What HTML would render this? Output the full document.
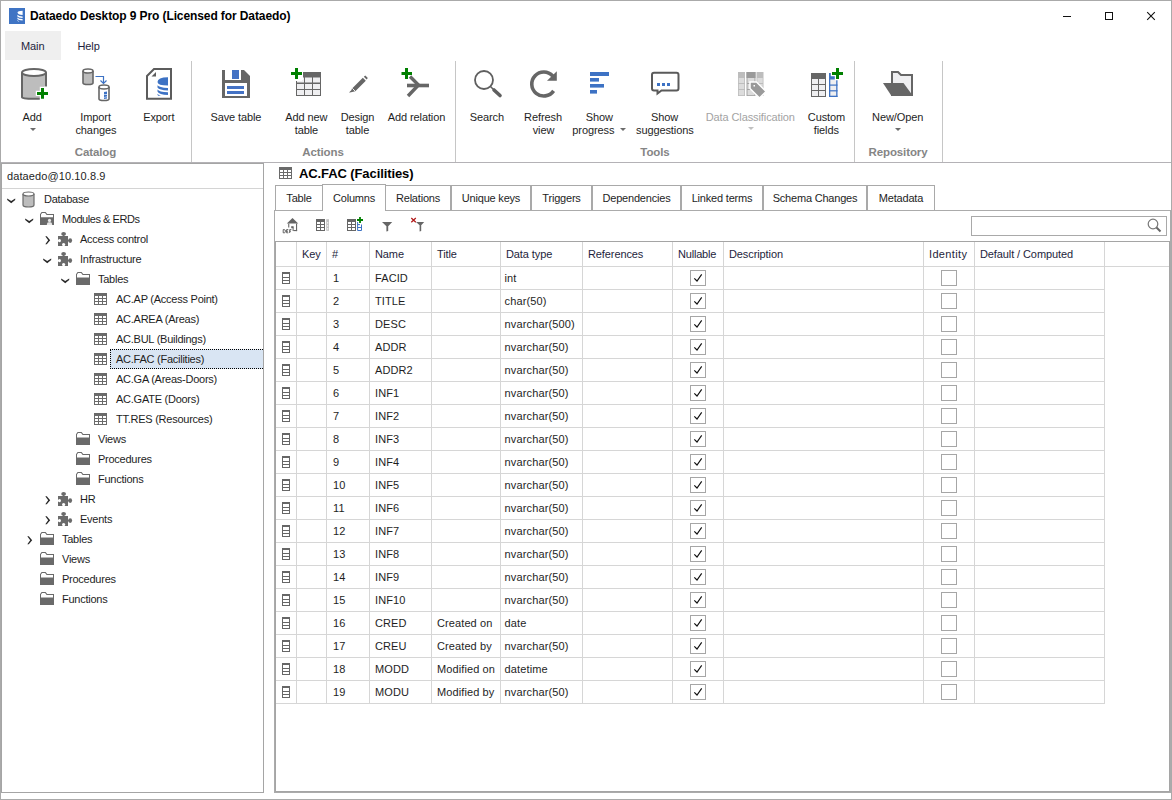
<!DOCTYPE html>
<html><head><meta charset="utf-8"><style>
html,body{margin:0;padding:0;width:1172px;height:800px;overflow:hidden;background:#fff;position:relative}
.t{position:absolute;white-space:nowrap;line-height:14px;font-family:"Liberation Sans", sans-serif;letter-spacing:-0.1px}
.c{text-align:center}
.r{position:absolute;box-sizing:content-box}
svg.r{overflow:visible}
</style></head><body>
<div class="r" style="left:0px;top:0px;width:1172px;height:1px;background:#aaaaaa;"></div>
<div class="r" style="left:0px;top:799px;width:1172px;height:1px;background:#aaaaaa;"></div>
<div class="r" style="left:0px;top:0px;width:1px;height:800px;background:#aaaaaa;"></div>
<div class="r" style="left:1171px;top:0px;width:1px;height:800px;background:#aaaaaa;"></div>
<svg class="r" style="left:9px;top:8px" width="16" height="16" viewBox="0 0 16 16"><rect width="16" height="16" fill="#3f74c4"/><path d="M8.6 4.6 Q8.6 3 13.6 2.8 L13.6 7 Q8.6 6.8 8.6 4.6Z" fill="#fff"/><path d="M8.4 6.8 Q9.5 8.3 13.6 8.4 L13.6 10 Q9.3 9.9 8.4 8.5Z" fill="#fff"/><path d="M8.4 9.4 Q9.5 10.9 13.6 11 L13.6 12.6 Q9.3 12.5 8.4 11.1Z" fill="#fff"/><path d="M8.4 12 Q9 13 10.5 13.4 L9.5 13.4 Q8.4 13 8.4 12.8Z" fill="#fff"/></svg>
<div class="t" style="left:30px;top:8.84px;font-size:12px;font-weight:bold;color:#000;">Dataedo Desktop 9 Pro (Licensed for Dataedo)</div>
<div class="r" style="left:1063px;top:16px;width:8px;height:1px;background:#111;"></div>
<div class="r" style="left:1105px;top:12px;width:6px;height:6px;border:1px solid #111"></div>
<svg class="r" style="left:1146px;top:11px" width="11" height="11" viewBox="0 0 11 11"><path d="M1.2 1.2 L8.8 8.8 M8.8 1.2 L1.2 8.8" stroke="#111" stroke-width="1.1"/></svg>
<div class="r" style="left:5px;top:31px;width:56px;height:29px;background:#efefef;"></div>
<div class="t" style="left:21px;top:39.19px;font-size:11px;color:#1e1e3c;">Main</div>
<div class="t" style="left:77.5px;top:39.19px;font-size:11px;color:#1e1e3c;">Help</div>
<div class="r" style="left:1px;top:162px;width:1170px;height:1px;background:#b4b2b6;"></div>
<div class="r" style="left:191px;top:61px;width:1px;height:101px;background:#c6c6c6;"></div>
<div class="r" style="left:455px;top:61px;width:1px;height:101px;background:#c6c6c6;"></div>
<div class="r" style="left:854px;top:61px;width:1px;height:101px;background:#c6c6c6;"></div>
<div class="r" style="left:942px;top:61px;width:1px;height:101px;background:#c6c6c6;"></div>
<div class="t c" style="left:-4.5px;width:200px;top:145.02px;font-size:11.5px;font-weight:bold;color:#858585;">Catalog</div>
<div class="t c" style="left:223px;width:200px;top:145.02px;font-size:11.5px;font-weight:bold;color:#858585;">Actions</div>
<div class="t c" style="left:555px;width:200px;top:145.02px;font-size:11.5px;font-weight:bold;color:#858585;">Tools</div>
<div class="t c" style="left:798px;width:200px;top:145.02px;font-size:11.5px;font-weight:bold;color:#858585;">Repository</div>
<div class="t c" style="left:-67.8px;width:200px;top:110.19px;font-size:11px;color:#1e1e1e;">Add</div>
<svg class="r" style="left:30px;top:128px" width="6" height="4" viewBox="0 0 6 4"><path d="M0 0 L6 0 L3 3 Z" fill="#6b6b6b"/></svg>
<div class="t c" style="left:-4.400000000000006px;width:200px;top:110.19px;font-size:11px;color:#1e1e1e;">Import</div>
<div class="t c" style="left:-4.099999999999994px;width:200px;top:123.19px;font-size:11px;color:#1e1e1e;">changes</div>
<div class="t c" style="left:58.80000000000001px;width:200px;top:110.19px;font-size:11px;color:#1e1e1e;">Export</div>
<div class="t c" style="left:135.9px;width:200px;top:110.19px;font-size:11px;color:#1e1e1e;">Save table</div>
<div class="t c" style="left:206.3px;width:200px;top:110.19px;font-size:11px;color:#1e1e1e;">Add new</div>
<div class="t c" style="left:206.39999999999998px;width:200px;top:123.19px;font-size:11px;color:#1e1e1e;">table</div>
<div class="t c" style="left:257.5px;width:200px;top:110.19px;font-size:11px;color:#1e1e1e;">Design</div>
<div class="t c" style="left:257.5px;width:200px;top:123.19px;font-size:11px;color:#1e1e1e;">table</div>
<div class="t c" style="left:316.5px;width:200px;top:110.19px;font-size:11px;color:#1e1e1e;">Add relation</div>
<div class="t c" style="left:386.9px;width:200px;top:110.19px;font-size:11px;color:#1e1e1e;">Search</div>
<div class="t c" style="left:443px;width:200px;top:110.19px;font-size:11px;color:#1e1e1e;">Refresh</div>
<div class="t c" style="left:443.5px;width:200px;top:123.19px;font-size:11px;color:#1e1e1e;">view</div>
<div class="t c" style="left:499.4px;width:200px;top:110.19px;font-size:11px;color:#1e1e1e;">Show</div>
<div class="t c" style="left:493.29999999999995px;width:200px;top:123.19px;font-size:11px;color:#1e1e1e;">progress</div>
<svg class="r" style="left:619.5px;top:128px" width="6" height="4" viewBox="0 0 6 4"><path d="M0 0 L6 0 L3 3 Z" fill="#6b6b6b"/></svg>
<div class="t c" style="left:564.6px;width:200px;top:110.19px;font-size:11px;color:#1e1e1e;">Show</div>
<div class="t c" style="left:564.8px;width:200px;top:123.19px;font-size:11px;color:#1e1e1e;">suggestions</div>
<div class="t c" style="left:650.3px;width:200px;top:110.19px;font-size:11px;color:#a3a3a3;">Data Classification</div>
<svg class="r" style="left:748.4px;top:127px" width="6" height="4" viewBox="0 0 6 4"><path d="M0 0 L6 0 L3 3 Z" fill="#c0c0c0"/></svg>
<div class="t c" style="left:726.5px;width:200px;top:110.19px;font-size:11px;color:#1e1e1e;">Custom</div>
<div class="t c" style="left:726.3px;width:200px;top:123.19px;font-size:11px;color:#1e1e1e;">fields</div>
<div class="t c" style="left:797.7px;width:200px;top:110.19px;font-size:11px;color:#1e1e1e;">New/Open</div>
<svg class="r" style="left:895px;top:128px" width="6" height="4" viewBox="0 0 6 4"><path d="M0 0 L6 0 L3 3 Z" fill="#6b6b6b"/></svg>
<svg class="r" style="left:17px;top:64px" width="36" height="40" viewBox="0 0 36 40"><path d="M5 8.5 L5 33.5 Q5 34.8 17 34.8 Q29 34.8 29 33.5 L29 8.5" fill="#bdbdbd" stroke="#666666" stroke-width="2"/><ellipse cx="17" cy="8.5" rx="12" ry="3.6" fill="#fff" stroke="#666666" stroke-width="2"/><path d="M18.8 29.4 L32.2 29.4 M25.5 22.8 L25.5 36.2" stroke="#fff" stroke-width="5.4"/><rect x="27.5" y="22.5" width="4" height="14" fill="#fff"/><path d="M20 29.4 L31 29.4 M25.5 24 L25.5 34.8" stroke="#008000" stroke-width="3"/></svg>
<svg class="r" style="left:80px;top:64.5px" width="34" height="40" viewBox="0 0 34 40"><path d="M3 6 L3 18 Q3 19.5 8 19.5 Q13 19.5 13 18 L13 6" fill="#bdbdbd" stroke="#666666" stroke-width="1.6"/><ellipse cx="8" cy="6" rx="5" ry="2" fill="#fff" stroke="#666666" stroke-width="1.6"/><path d="M15.5 11.5 L23.5 11.5 L23.5 18" fill="none" stroke="#3d72c4" stroke-width="1.2"/><path d="M20.5 15.5 L23.5 18.5 L26.5 15.5" fill="none" stroke="#3d72c4" stroke-width="1.2"/><path d="M19 22 L19 34 Q19 35.5 24 35.5 Q29 35.5 29 34 L29 22" fill="#fff" stroke="#666666" stroke-width="1.6"/><ellipse cx="24" cy="22" rx="5" ry="2" fill="#fff" stroke="#666666" stroke-width="1.6"/><path d="M24 27 L27 26.5 L27 29 L24 29.5Z M24 30 L27 29.8 L27 31.5 L24 32Z M24 32.5 L27 32.3 L27 33.5 L24 34Z" fill="#3d72c4"/></svg>
<svg class="r" style="left:144px;top:64px" width="32" height="40" viewBox="0 0 32 40"><path d="M3 12 L10 5 L27 5 L27 34.8 L3 34.8 Z" fill="#fff" stroke="#5c5c5c" stroke-width="2"/><path d="M7.5 12.5 L12 12.5 L12 8 Z" fill="#5c5c5c"/><path d="M13.5 18 Q13.5 13.5 24 13.3 L24 21.5 Q13.5 21.5 13.5 18Z" fill="#3d72c4"/><path d="M13.5 21.2 Q15 23.5 24 24 L24 26.5 Q15 26.2 13.5 23.5Z" fill="#3d72c4"/><path d="M13.5 25.5 Q15 28 24 28.3 L24 31 Q15 30.7 13.5 27.5Z" fill="#3d72c4"/><path d="M13.5 29.8 Q15 31.6 17 32 L15 32 Q13.5 31.5 13.5 30.5Z" fill="#3d72c4"/></svg>
<svg class="r" style="left:220px;top:66px" width="32" height="34" viewBox="0 0 32 34"><path d="M2 4 L21 4 L21 14 L5 14 L5 4 Z" fill="none"/><path d="M2 4 L24 4 L30 10 L30 32 L2 32 Z" fill="#666666"/><rect x="5" y="4" width="16" height="10" fill="#fff"/><rect x="12" y="4" width="7" height="9" fill="#4472c4"/><rect x="5" y="17" width="22" height="13" fill="#fff"/><rect x="7" y="20" width="17" height="3" fill="#4472c4"/><rect x="7" y="25" width="17" height="3" fill="#4472c4"/></svg>
<svg class="r" style="left:288px;top:64px" width="36" height="36" viewBox="0 0 36 36"><rect x="8" y="8" width="25" height="24" fill="#666666"/><rect x="9" y="13.5" width="7" height="5" fill="#efeff1"/><rect x="9" y="20" width="7" height="5" fill="#efeff1"/><rect x="9" y="26" width="7" height="5" fill="#efeff1"/><rect x="17" y="13.5" width="7" height="5" fill="#efeff1"/><rect x="17" y="20" width="7" height="5" fill="#efeff1"/><rect x="17" y="26" width="7" height="5" fill="#efeff1"/><rect x="25" y="13.5" width="7" height="5" fill="#efeff1"/><rect x="25" y="20" width="7" height="5" fill="#efeff1"/><rect x="25" y="26" width="7" height="5" fill="#efeff1"/><rect x="2" y="3" width="12" height="14" fill="#fff"/><rect x="1" y="5" width="14" height="11" fill="#fff"/><path d="M3 9.5 L14 9.5 M8.5 4 L8.5 15" stroke="#008000" stroke-width="3"/></svg>
<svg class="r" style="left:344px;top:70px" width="28" height="28" viewBox="0 0 28 28"><path d="M6 22.5 L8.3 18.3 L18.8 7.8 L21.8 10.8 L11.3 21.3 Z" fill="#666"/><path d="M19.8 6.8 L21.3 5.5 L23.8 8 L22.6 9.6 Z" fill="#666"/><path d="M8.3 18.3 L11.3 21.3" stroke="#fff" stroke-width="0.9"/><path d="M5 23 L6.4 20.8 L7.2 21.6Z" fill="#666"/></svg>
<svg class="r" style="left:396px;top:64px" width="36" height="36" viewBox="0 0 36 36"><path d="M11 21.5 L33 21.5" stroke="#666" stroke-width="3.6"/><path d="M14 12.5 L22.5 21 L12 32" fill="none" stroke="#666" stroke-width="3.4"/><path d="M5.5 9.5 L16 9.5 M10.5 4 L10.5 15" stroke="#008000" stroke-width="3"/></svg>
<svg class="r" style="left:468px;top:64px" width="36" height="36" viewBox="0 0 36 36"><circle cx="16" cy="16" r="9" fill="none" stroke="#5f5f5f" stroke-width="1.8"/><path d="M22.5 22.5 L25 25" stroke="#5f5f5f" stroke-width="1.5"/><path d="M26 26 L32 31.5" stroke="#5f5f5f" stroke-width="3.6" stroke-linecap="round"/></svg>
<svg class="r" style="left:524px;top:64px" width="36" height="36" viewBox="0 0 36 36"><path d="M29.6 26.9 A12 12 0 1 1 28.7 12" fill="none" stroke="#666" stroke-width="3.6"/><path d="M32.8 7.2 L32.8 16.8 L23 16.8 Z" fill="#666"/></svg>
<svg class="r" style="left:588px;top:68px" width="24" height="28" viewBox="0 0 24 28"><rect x="2" y="4" width="19" height="4" fill="#3d72c4"/><rect x="2" y="10" width="9" height="3.6" fill="#3d72c4"/><rect x="2" y="16" width="14" height="3.6" fill="#3d72c4"/><rect x="2" y="22" width="7" height="3.6" fill="#3d72c4"/></svg>
<svg class="r" style="left:648px;top:68px" width="34" height="30" viewBox="0 0 34 30"><path d="M6 4.8 L28.5 4.8 Q30.5 4.8 30.5 6.8 L30.5 20.5 Q30.5 22.5 28.5 22.5 L13.5 22.5 L9.5 25.5 L9.5 22.5 L6 22.5 Q4 22.5 4 20.5 L4 6.8 Q4 4.8 6 4.8 Z" fill="#fff" stroke="#5a5a5a" stroke-width="2"/><rect x="9" y="15" width="3" height="3" fill="#3d72c4"/><rect x="14" y="15" width="3" height="3" fill="#3d72c4"/><rect x="19" y="15" width="3" height="3" fill="#3d72c4"/></svg>
<svg class="r" style="left:732px;top:64px" width="36" height="36" viewBox="0 0 36 36"><rect x="6" y="8" width="7" height="24" fill="#bdbdbd"/><rect x="14.5" y="8" width="9" height="24" fill="#a3a3a3"/><rect x="24.5" y="8" width="7" height="24" fill="#bdbdbd"/><rect x="6.8" y="14" width="5.4" height="5" fill="#dcdcdc"/><rect x="6.8" y="20" width="5.4" height="5" fill="#dcdcdc"/><rect x="6.8" y="26" width="5.4" height="5.2" fill="#dcdcdc"/><rect x="14.5" y="8" width="9" height="6" fill="#9a9a9a"/><rect x="15.5" y="14" width="7" height="5" fill="#dcdcdc"/><rect x="15.5" y="20" width="7" height="5" fill="#dcdcdc"/><rect x="15.5" y="26" width="7" height="5.2" fill="#dcdcdc"/><rect x="25.3" y="14" width="5.4" height="5" fill="#dcdcdc"/><rect x="25.3" y="20" width="5.4" height="5" fill="#dcdcdc"/><path d="M18 18 L24.5 18 L34 27.5 L27.5 34 L18 24.5 Z" fill="#9a9a9a" stroke="#fff" stroke-width="1.5"/><rect x="21.5" y="21" width="1.5" height="1.5" fill="#fff"/></svg>
<svg class="r" style="left:806px;top:64px" width="40" height="36" viewBox="0 0 40 36"><rect x="5" y="9" width="15" height="24" fill="#666"/><rect x="6" y="15" width="6" height="5" fill="#efeff1"/><rect x="6" y="21" width="6" height="5" fill="#efeff1"/><rect x="6" y="27" width="6" height="5" fill="#efeff1"/><rect x="13" y="15" width="6" height="5" fill="#efeff1"/><rect x="13" y="21" width="6" height="5" fill="#efeff1"/><rect x="13" y="27" width="6" height="5" fill="#efeff1"/><rect x="24" y="15" width="7" height="17" fill="#efeff1"/><rect x="23" y="9" width="1.3" height="24" fill="#3d72c4"/><rect x="23" y="9" width="7" height="6.5" fill="#3d72c4"/><rect x="23" y="31.7" width="8.5" height="1.3" fill="#3d72c4"/><rect x="30.2" y="15" width="1.3" height="18" fill="#3d72c4"/><rect x="23" y="20.5" width="8.5" height="1.2" fill="#3d72c4"/><rect x="23" y="26.2" width="8.5" height="1.2" fill="#3d72c4"/><path d="M24.8 9.5 L38.2 9.5 M31.5 2.8 L31.5 16.2" stroke="#fff" stroke-width="5.4"/><path d="M26 9.5 L37 9.5 M31.5 4 L31.5 15" stroke="#008000" stroke-width="3"/></svg>
<svg class="r" style="left:878px;top:64px" width="38" height="36" viewBox="0 0 38 36"><path d="M14 8 L20 8 L23 11 L34 11 L34 31 L14 31 Z" fill="#efeff1" stroke="#666" stroke-width="2"/><path d="M5 19 L25.5 19 L35 32 L13.5 32 Z" fill="#666"/></svg>
<div class="r" style="left:1px;top:163px;width:261px;height:628px;border:1px solid #a5a5a5"></div>
<div class="t" style="left:7px;top:169.19px;font-size:11px;color:#1e1e1e;letter-spacing:0.1px;">dataedo@10.10.8.9</div>
<div class="r" style="left:2px;top:188px;width:261px;height:1px;background:#d4d4d4;"></div>
<svg class="r" style="left:7px;top:197.5px" width="9" height="6" viewBox="0 0 9 6"><path d="M0.2 0.4 L4.2 3.1 L8.2 0.4 L8.2 1.9 L4.2 5.3 L0.2 1.9 Z" fill="#2a2a2a"/></svg>
<svg class="r" style="left:22px;top:191px" width="13" height="17" viewBox="0 0 13 17"><path d="M1 3 L1 14 Q1 16 6.5 16 Q12 16 12 14 L12 3" fill="#bdbdbd" stroke="#6a6a6a" stroke-width="1.2"/><ellipse cx="6.5" cy="3" rx="5.5" ry="2" fill="#fff" stroke="#6a6a6a" stroke-width="1.2"/></svg>
<div class="t" style="left:44px;top:192.19px;font-size:11px;color:#1e1e1e;letter-spacing:-0.25px;">Database</div>
<svg class="r" style="left:25px;top:217.5px" width="9" height="6" viewBox="0 0 9 6"><path d="M0.2 0.4 L4.2 3.1 L8.2 0.4 L8.2 1.9 L4.2 5.3 L0.2 1.9 Z" fill="#2a2a2a"/></svg>
<svg class="r" style="left:40px;top:212px" width="14" height="13" viewBox="0 0 14 13"><path d="M0 2.2 L1.6 0 L5.6 0 L7.2 2 L14 2 L14 13 L0 13 Z" fill="#6a6a6a"/><path d="M1 5.2 L1 2.6 L2.1 1 L5.1 1 L6.6 3 L13 3 L13 5.2 Z" fill="#fff"/><circle cx="9.5" cy="8.4" r="1.6" fill="#e8e8e8"/><path d="M6.8 13 L7.3 10.8 L8.6 10.2 L10.4 10.2 L11.7 10.8 L12.2 13 Z" fill="#e8e8e8"/></svg>
<div class="t" style="left:62px;top:212.19px;font-size:11px;color:#1e1e1e;letter-spacing:-0.45px;">Modules &amp; ERDs</div>
<svg class="r" style="left:45px;top:236px" width="6" height="9" viewBox="0 0 6 9"><path d="M0.3 0.2 L1.8 0.2 L5.2 4.2 L1.8 8.2 L0.3 8.2 L3.2 4.2 Z" fill="#2a2a2a"/></svg>
<svg class="r" style="left:58px;top:232px" width="15" height="15" viewBox="0 0 15 15"><rect x="0" y="4" width="10" height="10" fill="#6a6a6a"/><ellipse cx="5.6" cy="1.9" rx="2.4" ry="1.8" fill="#6a6a6a"/><rect x="4.8" y="2" width="1.6" height="2.5" fill="#6a6a6a"/><ellipse cx="12.2" cy="8.6" rx="1.9" ry="2.4" fill="#6a6a6a"/><rect x="9.5" y="7.8" width="2.5" height="1.6" fill="#6a6a6a"/><ellipse cx="1.5" cy="8.6" rx="1.5" ry="1.7" fill="#fff"/><rect x="0" y="8" width="1" height="1.2" fill="#fff"/><ellipse cx="5.6" cy="12.4" rx="1.6" ry="1.5" fill="#fff"/><rect x="5" y="13" width="1.2" height="1" fill="#fff"/></svg>
<div class="t" style="left:80px;top:232.19px;font-size:11px;color:#1e1e1e;letter-spacing:-0.25px;">Access control</div>
<svg class="r" style="left:43px;top:257.5px" width="9" height="6" viewBox="0 0 9 6"><path d="M0.2 0.4 L4.2 3.1 L8.2 0.4 L8.2 1.9 L4.2 5.3 L0.2 1.9 Z" fill="#2a2a2a"/></svg>
<svg class="r" style="left:58px;top:252px" width="15" height="15" viewBox="0 0 15 15"><rect x="0" y="4" width="10" height="10" fill="#6a6a6a"/><ellipse cx="5.6" cy="1.9" rx="2.4" ry="1.8" fill="#6a6a6a"/><rect x="4.8" y="2" width="1.6" height="2.5" fill="#6a6a6a"/><ellipse cx="12.2" cy="8.6" rx="1.9" ry="2.4" fill="#6a6a6a"/><rect x="9.5" y="7.8" width="2.5" height="1.6" fill="#6a6a6a"/><ellipse cx="1.5" cy="8.6" rx="1.5" ry="1.7" fill="#fff"/><rect x="0" y="8" width="1" height="1.2" fill="#fff"/><ellipse cx="5.6" cy="12.4" rx="1.6" ry="1.5" fill="#fff"/><rect x="5" y="13" width="1.2" height="1" fill="#fff"/></svg>
<div class="t" style="left:80px;top:252.19px;font-size:11px;color:#1e1e1e;letter-spacing:-0.25px;">Infrastructure</div>
<svg class="r" style="left:61px;top:277.5px" width="9" height="6" viewBox="0 0 9 6"><path d="M0.2 0.4 L4.2 3.1 L8.2 0.4 L8.2 1.9 L4.2 5.3 L0.2 1.9 Z" fill="#2a2a2a"/></svg>
<svg class="r" style="left:76px;top:272px" width="14" height="13" viewBox="0 0 14 13"><path d="M0 2.2 L1.6 0 L5.6 0 L7.2 2 L14 2 L14 13 L0 13 Z" fill="#6a6a6a"/><path d="M1 5.6 L1 2.6 L2.1 1 L5.1 1 L6.6 3 L13 3 L13 5.6 Z" fill="#fff"/></svg>
<div class="t" style="left:98px;top:272.19px;font-size:11px;color:#1e1e1e;letter-spacing:-0.25px;">Tables</div>
<svg class="r" style="left:94px;top:293px" width="13" height="12" viewBox="0 0 13 12"><rect x="0" y="0" width="13" height="12" fill="#6a6a6a"/><rect x="1" y="3" width="3" height="2" fill="#fff"/><rect x="1" y="6" width="3" height="2" fill="#fff"/><rect x="1" y="9" width="3" height="2" fill="#fff"/><rect x="5" y="3" width="3" height="2" fill="#fff"/><rect x="5" y="6" width="3" height="2" fill="#fff"/><rect x="5" y="9" width="3" height="2" fill="#fff"/><rect x="9" y="3" width="3" height="2" fill="#fff"/><rect x="9" y="6" width="3" height="2" fill="#fff"/><rect x="9" y="9" width="3" height="2" fill="#fff"/></svg>
<div class="t" style="left:116px;top:292.19px;font-size:11px;color:#1e1e1e;letter-spacing:-0.25px;">AC.AP (Access Point)</div>
<svg class="r" style="left:94px;top:313px" width="13" height="12" viewBox="0 0 13 12"><rect x="0" y="0" width="13" height="12" fill="#6a6a6a"/><rect x="1" y="3" width="3" height="2" fill="#fff"/><rect x="1" y="6" width="3" height="2" fill="#fff"/><rect x="1" y="9" width="3" height="2" fill="#fff"/><rect x="5" y="3" width="3" height="2" fill="#fff"/><rect x="5" y="6" width="3" height="2" fill="#fff"/><rect x="5" y="9" width="3" height="2" fill="#fff"/><rect x="9" y="3" width="3" height="2" fill="#fff"/><rect x="9" y="6" width="3" height="2" fill="#fff"/><rect x="9" y="9" width="3" height="2" fill="#fff"/></svg>
<div class="t" style="left:116px;top:312.19px;font-size:11px;color:#1e1e1e;letter-spacing:-0.25px;">AC.AREA (Areas)</div>
<svg class="r" style="left:94px;top:333px" width="13" height="12" viewBox="0 0 13 12"><rect x="0" y="0" width="13" height="12" fill="#6a6a6a"/><rect x="1" y="3" width="3" height="2" fill="#fff"/><rect x="1" y="6" width="3" height="2" fill="#fff"/><rect x="1" y="9" width="3" height="2" fill="#fff"/><rect x="5" y="3" width="3" height="2" fill="#fff"/><rect x="5" y="6" width="3" height="2" fill="#fff"/><rect x="5" y="9" width="3" height="2" fill="#fff"/><rect x="9" y="3" width="3" height="2" fill="#fff"/><rect x="9" y="6" width="3" height="2" fill="#fff"/><rect x="9" y="9" width="3" height="2" fill="#fff"/></svg>
<div class="t" style="left:116px;top:332.19px;font-size:11px;color:#1e1e1e;letter-spacing:-0.25px;">AC.BUL (Buildings)</div>
<div class="r" style="left:110px;top:349px;width:152px;height:18px;background:#d9e5f3;border:1px dotted #000;border-right:none"></div>
<svg class="r" style="left:94px;top:353px" width="13" height="12" viewBox="0 0 13 12"><rect x="0" y="0" width="13" height="12" fill="#6a6a6a"/><rect x="1" y="3" width="3" height="2" fill="#fff"/><rect x="1" y="6" width="3" height="2" fill="#fff"/><rect x="1" y="9" width="3" height="2" fill="#fff"/><rect x="5" y="3" width="3" height="2" fill="#fff"/><rect x="5" y="6" width="3" height="2" fill="#fff"/><rect x="5" y="9" width="3" height="2" fill="#fff"/><rect x="9" y="3" width="3" height="2" fill="#fff"/><rect x="9" y="6" width="3" height="2" fill="#fff"/><rect x="9" y="9" width="3" height="2" fill="#fff"/></svg>
<div class="t" style="left:116px;top:352.19px;font-size:11px;color:#1e1e1e;letter-spacing:-0.25px;">AC.FAC (Facilities)</div>
<svg class="r" style="left:94px;top:373px" width="13" height="12" viewBox="0 0 13 12"><rect x="0" y="0" width="13" height="12" fill="#6a6a6a"/><rect x="1" y="3" width="3" height="2" fill="#fff"/><rect x="1" y="6" width="3" height="2" fill="#fff"/><rect x="1" y="9" width="3" height="2" fill="#fff"/><rect x="5" y="3" width="3" height="2" fill="#fff"/><rect x="5" y="6" width="3" height="2" fill="#fff"/><rect x="5" y="9" width="3" height="2" fill="#fff"/><rect x="9" y="3" width="3" height="2" fill="#fff"/><rect x="9" y="6" width="3" height="2" fill="#fff"/><rect x="9" y="9" width="3" height="2" fill="#fff"/></svg>
<div class="t" style="left:116px;top:372.19px;font-size:11px;color:#1e1e1e;letter-spacing:-0.25px;">AC.GA (Areas-Doors)</div>
<svg class="r" style="left:94px;top:393px" width="13" height="12" viewBox="0 0 13 12"><rect x="0" y="0" width="13" height="12" fill="#6a6a6a"/><rect x="1" y="3" width="3" height="2" fill="#fff"/><rect x="1" y="6" width="3" height="2" fill="#fff"/><rect x="1" y="9" width="3" height="2" fill="#fff"/><rect x="5" y="3" width="3" height="2" fill="#fff"/><rect x="5" y="6" width="3" height="2" fill="#fff"/><rect x="5" y="9" width="3" height="2" fill="#fff"/><rect x="9" y="3" width="3" height="2" fill="#fff"/><rect x="9" y="6" width="3" height="2" fill="#fff"/><rect x="9" y="9" width="3" height="2" fill="#fff"/></svg>
<div class="t" style="left:116px;top:392.19px;font-size:11px;color:#1e1e1e;letter-spacing:-0.25px;">AC.GATE (Doors)</div>
<svg class="r" style="left:94px;top:413px" width="13" height="12" viewBox="0 0 13 12"><rect x="0" y="0" width="13" height="12" fill="#6a6a6a"/><rect x="1" y="3" width="3" height="2" fill="#fff"/><rect x="1" y="6" width="3" height="2" fill="#fff"/><rect x="1" y="9" width="3" height="2" fill="#fff"/><rect x="5" y="3" width="3" height="2" fill="#fff"/><rect x="5" y="6" width="3" height="2" fill="#fff"/><rect x="5" y="9" width="3" height="2" fill="#fff"/><rect x="9" y="3" width="3" height="2" fill="#fff"/><rect x="9" y="6" width="3" height="2" fill="#fff"/><rect x="9" y="9" width="3" height="2" fill="#fff"/></svg>
<div class="t" style="left:116px;top:412.19px;font-size:11px;color:#1e1e1e;letter-spacing:-0.25px;">TT.RES (Resources)</div>
<svg class="r" style="left:76px;top:432px" width="14" height="13" viewBox="0 0 14 13"><path d="M0 2.2 L1.6 0 L5.6 0 L7.2 2 L14 2 L14 13 L0 13 Z" fill="#6a6a6a"/><path d="M1 5.6 L1 2.6 L2.1 1 L5.1 1 L6.6 3 L13 3 L13 5.6 Z" fill="#fff"/></svg>
<div class="t" style="left:98px;top:432.19px;font-size:11px;color:#1e1e1e;letter-spacing:-0.25px;">Views</div>
<svg class="r" style="left:76px;top:452px" width="14" height="13" viewBox="0 0 14 13"><path d="M0 2.2 L1.6 0 L5.6 0 L7.2 2 L14 2 L14 13 L0 13 Z" fill="#6a6a6a"/><path d="M1 5.6 L1 2.6 L2.1 1 L5.1 1 L6.6 3 L13 3 L13 5.6 Z" fill="#fff"/></svg>
<div class="t" style="left:98px;top:452.19px;font-size:11px;color:#1e1e1e;letter-spacing:-0.25px;">Procedures</div>
<svg class="r" style="left:76px;top:472px" width="14" height="13" viewBox="0 0 14 13"><path d="M0 2.2 L1.6 0 L5.6 0 L7.2 2 L14 2 L14 13 L0 13 Z" fill="#6a6a6a"/><path d="M1 5.6 L1 2.6 L2.1 1 L5.1 1 L6.6 3 L13 3 L13 5.6 Z" fill="#fff"/></svg>
<div class="t" style="left:98px;top:472.19px;font-size:11px;color:#1e1e1e;letter-spacing:-0.25px;">Functions</div>
<svg class="r" style="left:45px;top:496px" width="6" height="9" viewBox="0 0 6 9"><path d="M0.3 0.2 L1.8 0.2 L5.2 4.2 L1.8 8.2 L0.3 8.2 L3.2 4.2 Z" fill="#2a2a2a"/></svg>
<svg class="r" style="left:58px;top:492px" width="15" height="15" viewBox="0 0 15 15"><rect x="0" y="4" width="10" height="10" fill="#6a6a6a"/><ellipse cx="5.6" cy="1.9" rx="2.4" ry="1.8" fill="#6a6a6a"/><rect x="4.8" y="2" width="1.6" height="2.5" fill="#6a6a6a"/><ellipse cx="12.2" cy="8.6" rx="1.9" ry="2.4" fill="#6a6a6a"/><rect x="9.5" y="7.8" width="2.5" height="1.6" fill="#6a6a6a"/><ellipse cx="1.5" cy="8.6" rx="1.5" ry="1.7" fill="#fff"/><rect x="0" y="8" width="1" height="1.2" fill="#fff"/><ellipse cx="5.6" cy="12.4" rx="1.6" ry="1.5" fill="#fff"/><rect x="5" y="13" width="1.2" height="1" fill="#fff"/></svg>
<div class="t" style="left:80px;top:492.19px;font-size:11px;color:#1e1e1e;letter-spacing:-0.25px;">HR</div>
<svg class="r" style="left:45px;top:516px" width="6" height="9" viewBox="0 0 6 9"><path d="M0.3 0.2 L1.8 0.2 L5.2 4.2 L1.8 8.2 L0.3 8.2 L3.2 4.2 Z" fill="#2a2a2a"/></svg>
<svg class="r" style="left:58px;top:512px" width="15" height="15" viewBox="0 0 15 15"><rect x="0" y="4" width="10" height="10" fill="#6a6a6a"/><ellipse cx="5.6" cy="1.9" rx="2.4" ry="1.8" fill="#6a6a6a"/><rect x="4.8" y="2" width="1.6" height="2.5" fill="#6a6a6a"/><ellipse cx="12.2" cy="8.6" rx="1.9" ry="2.4" fill="#6a6a6a"/><rect x="9.5" y="7.8" width="2.5" height="1.6" fill="#6a6a6a"/><ellipse cx="1.5" cy="8.6" rx="1.5" ry="1.7" fill="#fff"/><rect x="0" y="8" width="1" height="1.2" fill="#fff"/><ellipse cx="5.6" cy="12.4" rx="1.6" ry="1.5" fill="#fff"/><rect x="5" y="13" width="1.2" height="1" fill="#fff"/></svg>
<div class="t" style="left:80px;top:512.19px;font-size:11px;color:#1e1e1e;letter-spacing:-0.25px;">Events</div>
<svg class="r" style="left:27px;top:536px" width="6" height="9" viewBox="0 0 6 9"><path d="M0.3 0.2 L1.8 0.2 L5.2 4.2 L1.8 8.2 L0.3 8.2 L3.2 4.2 Z" fill="#2a2a2a"/></svg>
<svg class="r" style="left:40px;top:532px" width="14" height="13" viewBox="0 0 14 13"><path d="M0 2.2 L1.6 0 L5.6 0 L7.2 2 L14 2 L14 13 L0 13 Z" fill="#6a6a6a"/><path d="M1 5.6 L1 2.6 L2.1 1 L5.1 1 L6.6 3 L13 3 L13 5.6 Z" fill="#fff"/></svg>
<div class="t" style="left:62px;top:532.19px;font-size:11px;color:#1e1e1e;letter-spacing:-0.25px;">Tables</div>
<svg class="r" style="left:40px;top:552px" width="14" height="13" viewBox="0 0 14 13"><path d="M0 2.2 L1.6 0 L5.6 0 L7.2 2 L14 2 L14 13 L0 13 Z" fill="#6a6a6a"/><path d="M1 5.6 L1 2.6 L2.1 1 L5.1 1 L6.6 3 L13 3 L13 5.6 Z" fill="#fff"/></svg>
<div class="t" style="left:62px;top:552.19px;font-size:11px;color:#1e1e1e;letter-spacing:-0.25px;">Views</div>
<svg class="r" style="left:40px;top:572px" width="14" height="13" viewBox="0 0 14 13"><path d="M0 2.2 L1.6 0 L5.6 0 L7.2 2 L14 2 L14 13 L0 13 Z" fill="#6a6a6a"/><path d="M1 5.6 L1 2.6 L2.1 1 L5.1 1 L6.6 3 L13 3 L13 5.6 Z" fill="#fff"/></svg>
<div class="t" style="left:62px;top:572.19px;font-size:11px;color:#1e1e1e;letter-spacing:-0.25px;">Procedures</div>
<svg class="r" style="left:40px;top:592px" width="14" height="13" viewBox="0 0 14 13"><path d="M0 2.2 L1.6 0 L5.6 0 L7.2 2 L14 2 L14 13 L0 13 Z" fill="#6a6a6a"/><path d="M1 5.6 L1 2.6 L2.1 1 L5.1 1 L6.6 3 L13 3 L13 5.6 Z" fill="#fff"/></svg>
<div class="t" style="left:62px;top:592.19px;font-size:11px;color:#1e1e1e;letter-spacing:-0.25px;">Functions</div>
<svg class="r" style="left:279px;top:167px" width="13" height="12" viewBox="0 0 13 12"><rect x="0" y="0" width="13" height="12" fill="#6a6a6a"/><rect x="1" y="3" width="3" height="2" fill="#fff"/><rect x="1" y="6" width="3" height="2" fill="#fff"/><rect x="1" y="9" width="3" height="2" fill="#fff"/><rect x="5" y="3" width="3" height="2" fill="#fff"/><rect x="5" y="6" width="3" height="2" fill="#fff"/><rect x="5" y="9" width="3" height="2" fill="#fff"/><rect x="9" y="3" width="3" height="2" fill="#fff"/><rect x="9" y="6" width="3" height="2" fill="#fff"/><rect x="9" y="9" width="3" height="2" fill="#fff"/></svg>
<div class="t" style="left:299px;top:166.50px;font-size:13px;font-weight:bold;color:#000;">AC.FAC (Facilities)</div>
<div class="r" style="left:274px;top:210px;width:895px;height:581px;border:1px solid #ababab"></div>
<div class="r" style="left:275px;top:185px;width:46px;height:24px;background:#fff;border:1px solid #a9a9a9;border-bottom:none"></div>
<div class="t c" style="left:199.0px;width:200px;top:191.19px;font-size:11px;color:#1e1e1e;letter-spacing:-0.2px;">Table</div>
<div class="r" style="left:322px;top:184px;width:62px;height:26px;background:#fff;border:1px solid #a9a9a9;border-bottom:none"></div>
<div class="t c" style="left:254.0px;width:200px;top:191.19px;font-size:11px;color:#1e1e1e;letter-spacing:-0.2px;">Columns</div>
<div class="r" style="left:385px;top:185px;width:64px;height:24px;background:#fff;border:1px solid #a9a9a9;border-bottom:none"></div>
<div class="t c" style="left:318.0px;width:200px;top:191.19px;font-size:11px;color:#1e1e1e;letter-spacing:-0.2px;">Relations</div>
<div class="r" style="left:451px;top:185px;width:78px;height:24px;background:#fff;border:1px solid #a9a9a9;border-bottom:none"></div>
<div class="t c" style="left:391.0px;width:200px;top:191.19px;font-size:11px;color:#1e1e1e;letter-spacing:-0.2px;">Unique keys</div>
<div class="r" style="left:531px;top:185px;width:59px;height:24px;background:#fff;border:1px solid #a9a9a9;border-bottom:none"></div>
<div class="t c" style="left:461.5px;width:200px;top:191.19px;font-size:11px;color:#1e1e1e;letter-spacing:-0.2px;">Triggers</div>
<div class="r" style="left:592px;top:185px;width:87px;height:24px;background:#fff;border:1px solid #a9a9a9;border-bottom:none"></div>
<div class="t c" style="left:536.5px;width:200px;top:191.19px;font-size:11px;color:#1e1e1e;letter-spacing:-0.2px;">Dependencies</div>
<div class="r" style="left:681px;top:185px;width:80px;height:24px;background:#fff;border:1px solid #a9a9a9;border-bottom:none"></div>
<div class="t c" style="left:622.0px;width:200px;top:191.19px;font-size:11px;color:#1e1e1e;letter-spacing:-0.2px;">Linked terms</div>
<div class="r" style="left:763px;top:185px;width:102px;height:24px;background:#fff;border:1px solid #a9a9a9;border-bottom:none"></div>
<div class="t c" style="left:715.0px;width:200px;top:191.19px;font-size:11px;color:#1e1e1e;letter-spacing:-0.2px;">Schema Changes</div>
<div class="r" style="left:867px;top:185px;width:66px;height:24px;background:#fff;border:1px solid #a9a9a9;border-bottom:none"></div>
<div class="t c" style="left:801.0px;width:200px;top:191.19px;font-size:11px;color:#1e1e1e;letter-spacing:-0.2px;">Metadata</div>
<svg class="r" style="left:282px;top:217px" width="18" height="17" viewBox="0 0 18 17"><path d="M4.8 6.6 L10.5 1 L16.2 6.6 Z" fill="#666"/><rect x="6.2" y="6.5" width="1.1" height="4" fill="#666"/><rect x="14" y="6.5" width="1.1" height="7.6" fill="#666"/><rect x="11.4" y="13" width="3.7" height="1.1" fill="#666"/><rect x="9.2" y="9.2" width="2.4" height="2" fill="#666"/><rect x="10.6" y="10.5" width="1" height="3.5" fill="#666"/><path d="M1.2 12.6 L2.4 12.6 Q3.4 12.6 3.4 14.2 Q3.4 15.8 2.4 15.8 L1.2 15.8 Z" fill="none" stroke="#555" stroke-width="0.9"/><path d="M6.3 12.6 L4.6 12.6 L4.6 15.8 L6.3 15.8 M4.6 14.2 L6 14.2" fill="none" stroke="#555" stroke-width="0.9"/><path d="M9.4 12.6 L7.7 12.6 L7.7 16 M7.7 14.2 L9 14.2" fill="none" stroke="#555" stroke-width="0.9"/></svg>
<svg class="r" style="left:315px;top:218px" width="15" height="14" viewBox="0 0 15 14"><rect x="1" y="1" width="9" height="12" fill="#666"/><rect x="2" y="4" width="3" height="2" fill="#fff"/><rect x="2" y="7" width="3" height="2" fill="#fff"/><rect x="2" y="10" width="3" height="2" fill="#fff"/><rect x="6" y="4" width="3" height="2" fill="#fff"/><rect x="6" y="7" width="3" height="2" fill="#fff"/><rect x="6" y="10" width="3" height="2" fill="#fff"/><rect x="11.2" y="1.2" width="2.8" height="11.6" fill="#c4c4c4"/><rect x="12" y="4" width="1.2" height="1.6" fill="#eee"/><rect x="12" y="7" width="1.2" height="1.6" fill="#eee"/><rect x="12" y="10" width="1.2" height="1.6" fill="#eee"/></svg>
<svg class="r" style="left:346px;top:216px" width="18" height="16" viewBox="0 0 18 16"><rect x="1" y="3" width="9" height="12" fill="#666"/><rect x="2" y="6" width="3" height="2" fill="#fff"/><rect x="2" y="9" width="3" height="2" fill="#fff"/><rect x="2" y="12" width="3" height="2" fill="#fff"/><rect x="6" y="6" width="3" height="2" fill="#fff"/><rect x="6" y="9" width="3" height="2" fill="#fff"/><rect x="6" y="12" width="3" height="2" fill="#fff"/><path d="M11.6 6 L11.6 14.5 L15.5 14.5 L15.5 8.5" fill="none" stroke="#3d72c4" stroke-width="1"/><path d="M11.6 8.6 L14 8.6 M11.6 11.5 L15.5 11.5" stroke="#3d72c4" stroke-width="1"/><path d="M11 4 L17 4 M14 1 L14 7" stroke="#008000" stroke-width="1.8"/></svg>
<svg class="r" style="left:380px;top:220px" width="14" height="12" viewBox="0 0 14 12"><path d="M2 2 L12.2 2 L8.2 6.2 L8.2 11 L6.4 11.6 L6.4 6.2 Z" fill="#666"/></svg>
<svg class="r" style="left:410px;top:216px" width="16" height="16" viewBox="0 0 16 16"><path d="M1.3 2 L5.8 6.3 M5.8 2 L1.3 6.3" stroke="#b01818" stroke-width="1.2"/><path d="M6 6 L14.2 6 L11.2 9.2 L11.2 15 L9.6 15.4 L9.6 9.2 Z" fill="#666"/></svg>
<div class="r" style="left:971px;top:216px;width:194px;height:18px;border:1px solid #a9a9a9;background:#fff"></div>
<svg class="r" style="left:1146px;top:218px" width="18" height="16" viewBox="0 0 18 16"><circle cx="7" cy="6" r="4.8" fill="none" stroke="#777" stroke-width="1.2"/><path d="M10.5 9.5 L14.5 13.5" stroke="#666" stroke-width="2"/></svg>
<div class="r" style="left:275px;top:241px;width:893px;height:549px;border:1px solid #a5a5a5"></div>
<div class="r" style="left:276px;top:266px;width:893px;height:1px;background:#d6d6d6;"></div>
<div class="r" style="left:296px;top:242px;width:1px;height:24px;background:#d6d6d6;"></div>
<div class="r" style="left:326px;top:242px;width:1px;height:24px;background:#d6d6d6;"></div>
<div class="r" style="left:369px;top:242px;width:1px;height:24px;background:#d6d6d6;"></div>
<div class="r" style="left:431px;top:242px;width:1px;height:24px;background:#d6d6d6;"></div>
<div class="r" style="left:500px;top:242px;width:1px;height:24px;background:#d6d6d6;"></div>
<div class="r" style="left:582px;top:242px;width:1px;height:24px;background:#d6d6d6;"></div>
<div class="r" style="left:672px;top:242px;width:1px;height:24px;background:#d6d6d6;"></div>
<div class="r" style="left:723px;top:242px;width:1px;height:24px;background:#d6d6d6;"></div>
<div class="r" style="left:923px;top:242px;width:1px;height:24px;background:#d6d6d6;"></div>
<div class="r" style="left:974px;top:242px;width:1px;height:24px;background:#d6d6d6;"></div>
<div class="r" style="left:1104px;top:242px;width:1px;height:24px;background:#d6d6d6;"></div>
<div class="r" style="left:276px;top:289px;width:829px;height:1px;background:#d6d6d6;"></div>
<div class="r" style="left:276px;top:312px;width:829px;height:1px;background:#d6d6d6;"></div>
<div class="r" style="left:276px;top:335px;width:829px;height:1px;background:#d6d6d6;"></div>
<div class="r" style="left:276px;top:358px;width:829px;height:1px;background:#d6d6d6;"></div>
<div class="r" style="left:276px;top:381px;width:829px;height:1px;background:#d6d6d6;"></div>
<div class="r" style="left:276px;top:404px;width:829px;height:1px;background:#d6d6d6;"></div>
<div class="r" style="left:276px;top:427px;width:829px;height:1px;background:#d6d6d6;"></div>
<div class="r" style="left:276px;top:450px;width:829px;height:1px;background:#d6d6d6;"></div>
<div class="r" style="left:276px;top:473px;width:829px;height:1px;background:#d6d6d6;"></div>
<div class="r" style="left:276px;top:496px;width:829px;height:1px;background:#d6d6d6;"></div>
<div class="r" style="left:276px;top:519px;width:829px;height:1px;background:#d6d6d6;"></div>
<div class="r" style="left:276px;top:542px;width:829px;height:1px;background:#d6d6d6;"></div>
<div class="r" style="left:276px;top:565px;width:829px;height:1px;background:#d6d6d6;"></div>
<div class="r" style="left:276px;top:588px;width:829px;height:1px;background:#d6d6d6;"></div>
<div class="r" style="left:276px;top:611px;width:829px;height:1px;background:#d6d6d6;"></div>
<div class="r" style="left:276px;top:634px;width:829px;height:1px;background:#d6d6d6;"></div>
<div class="r" style="left:276px;top:657px;width:829px;height:1px;background:#d6d6d6;"></div>
<div class="r" style="left:276px;top:680px;width:829px;height:1px;background:#d6d6d6;"></div>
<div class="r" style="left:276px;top:703px;width:829px;height:1px;background:#d6d6d6;"></div>
<div class="r" style="left:296px;top:267px;width:1px;height:437px;background:#d6d6d6;"></div>
<div class="r" style="left:326px;top:267px;width:1px;height:437px;background:#d6d6d6;"></div>
<div class="r" style="left:369px;top:267px;width:1px;height:437px;background:#d6d6d6;"></div>
<div class="r" style="left:431px;top:267px;width:1px;height:437px;background:#d6d6d6;"></div>
<div class="r" style="left:500px;top:267px;width:1px;height:437px;background:#d6d6d6;"></div>
<div class="r" style="left:582px;top:267px;width:1px;height:437px;background:#d6d6d6;"></div>
<div class="r" style="left:672px;top:267px;width:1px;height:437px;background:#d6d6d6;"></div>
<div class="r" style="left:723px;top:267px;width:1px;height:437px;background:#d6d6d6;"></div>
<div class="r" style="left:923px;top:267px;width:1px;height:437px;background:#d6d6d6;"></div>
<div class="r" style="left:974px;top:267px;width:1px;height:437px;background:#d6d6d6;"></div>
<div class="r" style="left:1104px;top:267px;width:1px;height:437px;background:#d6d6d6;"></div>
<div class="t" style="left:302px;top:247.19px;font-size:11px;color:#1e1e3c;">Key</div>
<div class="t" style="left:332px;top:247.19px;font-size:11px;color:#1e1e3c;">#</div>
<div class="t" style="left:375px;top:247.19px;font-size:11px;color:#1e1e3c;">Name</div>
<div class="t" style="left:437px;top:247.19px;font-size:11px;color:#1e1e3c;">Title</div>
<div class="t" style="left:506px;top:247.19px;font-size:11px;color:#1e1e3c;">Data type</div>
<div class="t" style="left:588px;top:247.19px;font-size:11px;color:#1e1e3c;">References</div>
<div class="t" style="left:678px;top:247.19px;font-size:11px;color:#1e1e3c;letter-spacing:-0.2px;">Nullable</div>
<div class="t" style="left:729px;top:247.19px;font-size:11px;color:#1e1e3c;">Description</div>
<div class="t" style="left:929px;top:247.19px;font-size:11px;color:#1e1e3c;letter-spacing:0.35px;">Identity</div>
<div class="t" style="left:980px;top:247.19px;font-size:11px;color:#1e1e3c;">Default / Computed</div>
<svg class="r" style="left:282px;top:272px" width="8" height="12" viewBox="0 0 8 12"><rect x="0" y="0" width="8" height="12" fill="#666"/><rect x="1" y="2" width="6" height="3" fill="#fff"/><rect x="1" y="6" width="6" height="2" fill="#fff"/><rect x="1" y="9" width="6" height="2" fill="#fff"/></svg>
<div class="t" style="left:333px;top:271.19px;font-size:11px;color:#1e1e1e;letter-spacing:0.1px;">1</div>
<div class="t" style="left:375px;top:271.19px;font-size:11px;color:#1e1e1e;letter-spacing:0.1px;">FACID</div>
<div class="t" style="left:504.5px;top:271.19px;font-size:11px;color:#1e1e1e;letter-spacing:0.15px;">int</div>
<div class="r" style="left:690px;top:270px;width:14px;height:14px;border:1px solid #a6a6a6;background:#fff"></div>
<svg class="r" style="left:690px;top:270px" width="16" height="16" viewBox="0 0 16 16"><path d="M4.3 8.3 L7 11 L11.7 4.3" fill="none" stroke="#111" stroke-width="1.15"/></svg>
<div class="r" style="left:941px;top:270px;width:14px;height:14px;border:1px solid #a6a6a6;background:#fff"></div>
<svg class="r" style="left:282px;top:295px" width="8" height="12" viewBox="0 0 8 12"><rect x="0" y="0" width="8" height="12" fill="#666"/><rect x="1" y="2" width="6" height="3" fill="#fff"/><rect x="1" y="6" width="6" height="2" fill="#fff"/><rect x="1" y="9" width="6" height="2" fill="#fff"/></svg>
<div class="t" style="left:333px;top:294.19px;font-size:11px;color:#1e1e1e;letter-spacing:0.1px;">2</div>
<div class="t" style="left:375px;top:294.19px;font-size:11px;color:#1e1e1e;letter-spacing:0.1px;">TITLE</div>
<div class="t" style="left:504.5px;top:294.19px;font-size:11px;color:#1e1e1e;letter-spacing:0.15px;">char(50)</div>
<div class="r" style="left:690px;top:293px;width:14px;height:14px;border:1px solid #a6a6a6;background:#fff"></div>
<svg class="r" style="left:690px;top:293px" width="16" height="16" viewBox="0 0 16 16"><path d="M4.3 8.3 L7 11 L11.7 4.3" fill="none" stroke="#111" stroke-width="1.15"/></svg>
<div class="r" style="left:941px;top:293px;width:14px;height:14px;border:1px solid #a6a6a6;background:#fff"></div>
<svg class="r" style="left:282px;top:318px" width="8" height="12" viewBox="0 0 8 12"><rect x="0" y="0" width="8" height="12" fill="#666"/><rect x="1" y="2" width="6" height="3" fill="#fff"/><rect x="1" y="6" width="6" height="2" fill="#fff"/><rect x="1" y="9" width="6" height="2" fill="#fff"/></svg>
<div class="t" style="left:333px;top:317.19px;font-size:11px;color:#1e1e1e;letter-spacing:0.1px;">3</div>
<div class="t" style="left:375px;top:317.19px;font-size:11px;color:#1e1e1e;letter-spacing:0.1px;">DESC</div>
<div class="t" style="left:504.5px;top:317.19px;font-size:11px;color:#1e1e1e;letter-spacing:0.15px;">nvarchar(500)</div>
<div class="r" style="left:690px;top:316px;width:14px;height:14px;border:1px solid #a6a6a6;background:#fff"></div>
<svg class="r" style="left:690px;top:316px" width="16" height="16" viewBox="0 0 16 16"><path d="M4.3 8.3 L7 11 L11.7 4.3" fill="none" stroke="#111" stroke-width="1.15"/></svg>
<div class="r" style="left:941px;top:316px;width:14px;height:14px;border:1px solid #a6a6a6;background:#fff"></div>
<svg class="r" style="left:282px;top:341px" width="8" height="12" viewBox="0 0 8 12"><rect x="0" y="0" width="8" height="12" fill="#666"/><rect x="1" y="2" width="6" height="3" fill="#fff"/><rect x="1" y="6" width="6" height="2" fill="#fff"/><rect x="1" y="9" width="6" height="2" fill="#fff"/></svg>
<div class="t" style="left:333px;top:340.19px;font-size:11px;color:#1e1e1e;letter-spacing:0.1px;">4</div>
<div class="t" style="left:375px;top:340.19px;font-size:11px;color:#1e1e1e;letter-spacing:0.1px;">ADDR</div>
<div class="t" style="left:504.5px;top:340.19px;font-size:11px;color:#1e1e1e;letter-spacing:0.15px;">nvarchar(50)</div>
<div class="r" style="left:690px;top:339px;width:14px;height:14px;border:1px solid #a6a6a6;background:#fff"></div>
<svg class="r" style="left:690px;top:339px" width="16" height="16" viewBox="0 0 16 16"><path d="M4.3 8.3 L7 11 L11.7 4.3" fill="none" stroke="#111" stroke-width="1.15"/></svg>
<div class="r" style="left:941px;top:339px;width:14px;height:14px;border:1px solid #a6a6a6;background:#fff"></div>
<svg class="r" style="left:282px;top:364px" width="8" height="12" viewBox="0 0 8 12"><rect x="0" y="0" width="8" height="12" fill="#666"/><rect x="1" y="2" width="6" height="3" fill="#fff"/><rect x="1" y="6" width="6" height="2" fill="#fff"/><rect x="1" y="9" width="6" height="2" fill="#fff"/></svg>
<div class="t" style="left:333px;top:363.19px;font-size:11px;color:#1e1e1e;letter-spacing:0.1px;">5</div>
<div class="t" style="left:375px;top:363.19px;font-size:11px;color:#1e1e1e;letter-spacing:0.1px;">ADDR2</div>
<div class="t" style="left:504.5px;top:363.19px;font-size:11px;color:#1e1e1e;letter-spacing:0.15px;">nvarchar(50)</div>
<div class="r" style="left:690px;top:362px;width:14px;height:14px;border:1px solid #a6a6a6;background:#fff"></div>
<svg class="r" style="left:690px;top:362px" width="16" height="16" viewBox="0 0 16 16"><path d="M4.3 8.3 L7 11 L11.7 4.3" fill="none" stroke="#111" stroke-width="1.15"/></svg>
<div class="r" style="left:941px;top:362px;width:14px;height:14px;border:1px solid #a6a6a6;background:#fff"></div>
<svg class="r" style="left:282px;top:387px" width="8" height="12" viewBox="0 0 8 12"><rect x="0" y="0" width="8" height="12" fill="#666"/><rect x="1" y="2" width="6" height="3" fill="#fff"/><rect x="1" y="6" width="6" height="2" fill="#fff"/><rect x="1" y="9" width="6" height="2" fill="#fff"/></svg>
<div class="t" style="left:333px;top:386.19px;font-size:11px;color:#1e1e1e;letter-spacing:0.1px;">6</div>
<div class="t" style="left:375px;top:386.19px;font-size:11px;color:#1e1e1e;letter-spacing:0.1px;">INF1</div>
<div class="t" style="left:504.5px;top:386.19px;font-size:11px;color:#1e1e1e;letter-spacing:0.15px;">nvarchar(50)</div>
<div class="r" style="left:690px;top:385px;width:14px;height:14px;border:1px solid #a6a6a6;background:#fff"></div>
<svg class="r" style="left:690px;top:385px" width="16" height="16" viewBox="0 0 16 16"><path d="M4.3 8.3 L7 11 L11.7 4.3" fill="none" stroke="#111" stroke-width="1.15"/></svg>
<div class="r" style="left:941px;top:385px;width:14px;height:14px;border:1px solid #a6a6a6;background:#fff"></div>
<svg class="r" style="left:282px;top:410px" width="8" height="12" viewBox="0 0 8 12"><rect x="0" y="0" width="8" height="12" fill="#666"/><rect x="1" y="2" width="6" height="3" fill="#fff"/><rect x="1" y="6" width="6" height="2" fill="#fff"/><rect x="1" y="9" width="6" height="2" fill="#fff"/></svg>
<div class="t" style="left:333px;top:409.19px;font-size:11px;color:#1e1e1e;letter-spacing:0.1px;">7</div>
<div class="t" style="left:375px;top:409.19px;font-size:11px;color:#1e1e1e;letter-spacing:0.1px;">INF2</div>
<div class="t" style="left:504.5px;top:409.19px;font-size:11px;color:#1e1e1e;letter-spacing:0.15px;">nvarchar(50)</div>
<div class="r" style="left:690px;top:408px;width:14px;height:14px;border:1px solid #a6a6a6;background:#fff"></div>
<svg class="r" style="left:690px;top:408px" width="16" height="16" viewBox="0 0 16 16"><path d="M4.3 8.3 L7 11 L11.7 4.3" fill="none" stroke="#111" stroke-width="1.15"/></svg>
<div class="r" style="left:941px;top:408px;width:14px;height:14px;border:1px solid #a6a6a6;background:#fff"></div>
<svg class="r" style="left:282px;top:433px" width="8" height="12" viewBox="0 0 8 12"><rect x="0" y="0" width="8" height="12" fill="#666"/><rect x="1" y="2" width="6" height="3" fill="#fff"/><rect x="1" y="6" width="6" height="2" fill="#fff"/><rect x="1" y="9" width="6" height="2" fill="#fff"/></svg>
<div class="t" style="left:333px;top:432.19px;font-size:11px;color:#1e1e1e;letter-spacing:0.1px;">8</div>
<div class="t" style="left:375px;top:432.19px;font-size:11px;color:#1e1e1e;letter-spacing:0.1px;">INF3</div>
<div class="t" style="left:504.5px;top:432.19px;font-size:11px;color:#1e1e1e;letter-spacing:0.15px;">nvarchar(50)</div>
<div class="r" style="left:690px;top:431px;width:14px;height:14px;border:1px solid #a6a6a6;background:#fff"></div>
<svg class="r" style="left:690px;top:431px" width="16" height="16" viewBox="0 0 16 16"><path d="M4.3 8.3 L7 11 L11.7 4.3" fill="none" stroke="#111" stroke-width="1.15"/></svg>
<div class="r" style="left:941px;top:431px;width:14px;height:14px;border:1px solid #a6a6a6;background:#fff"></div>
<svg class="r" style="left:282px;top:456px" width="8" height="12" viewBox="0 0 8 12"><rect x="0" y="0" width="8" height="12" fill="#666"/><rect x="1" y="2" width="6" height="3" fill="#fff"/><rect x="1" y="6" width="6" height="2" fill="#fff"/><rect x="1" y="9" width="6" height="2" fill="#fff"/></svg>
<div class="t" style="left:333px;top:455.19px;font-size:11px;color:#1e1e1e;letter-spacing:0.1px;">9</div>
<div class="t" style="left:375px;top:455.19px;font-size:11px;color:#1e1e1e;letter-spacing:0.1px;">INF4</div>
<div class="t" style="left:504.5px;top:455.19px;font-size:11px;color:#1e1e1e;letter-spacing:0.15px;">nvarchar(50)</div>
<div class="r" style="left:690px;top:454px;width:14px;height:14px;border:1px solid #a6a6a6;background:#fff"></div>
<svg class="r" style="left:690px;top:454px" width="16" height="16" viewBox="0 0 16 16"><path d="M4.3 8.3 L7 11 L11.7 4.3" fill="none" stroke="#111" stroke-width="1.15"/></svg>
<div class="r" style="left:941px;top:454px;width:14px;height:14px;border:1px solid #a6a6a6;background:#fff"></div>
<svg class="r" style="left:282px;top:479px" width="8" height="12" viewBox="0 0 8 12"><rect x="0" y="0" width="8" height="12" fill="#666"/><rect x="1" y="2" width="6" height="3" fill="#fff"/><rect x="1" y="6" width="6" height="2" fill="#fff"/><rect x="1" y="9" width="6" height="2" fill="#fff"/></svg>
<div class="t" style="left:333px;top:478.19px;font-size:11px;color:#1e1e1e;letter-spacing:0.1px;">10</div>
<div class="t" style="left:375px;top:478.19px;font-size:11px;color:#1e1e1e;letter-spacing:0.1px;">INF5</div>
<div class="t" style="left:504.5px;top:478.19px;font-size:11px;color:#1e1e1e;letter-spacing:0.15px;">nvarchar(50)</div>
<div class="r" style="left:690px;top:477px;width:14px;height:14px;border:1px solid #a6a6a6;background:#fff"></div>
<svg class="r" style="left:690px;top:477px" width="16" height="16" viewBox="0 0 16 16"><path d="M4.3 8.3 L7 11 L11.7 4.3" fill="none" stroke="#111" stroke-width="1.15"/></svg>
<div class="r" style="left:941px;top:477px;width:14px;height:14px;border:1px solid #a6a6a6;background:#fff"></div>
<svg class="r" style="left:282px;top:502px" width="8" height="12" viewBox="0 0 8 12"><rect x="0" y="0" width="8" height="12" fill="#666"/><rect x="1" y="2" width="6" height="3" fill="#fff"/><rect x="1" y="6" width="6" height="2" fill="#fff"/><rect x="1" y="9" width="6" height="2" fill="#fff"/></svg>
<div class="t" style="left:333px;top:501.19px;font-size:11px;color:#1e1e1e;letter-spacing:0.1px;">11</div>
<div class="t" style="left:375px;top:501.19px;font-size:11px;color:#1e1e1e;letter-spacing:0.1px;">INF6</div>
<div class="t" style="left:504.5px;top:501.19px;font-size:11px;color:#1e1e1e;letter-spacing:0.15px;">nvarchar(50)</div>
<div class="r" style="left:690px;top:500px;width:14px;height:14px;border:1px solid #a6a6a6;background:#fff"></div>
<svg class="r" style="left:690px;top:500px" width="16" height="16" viewBox="0 0 16 16"><path d="M4.3 8.3 L7 11 L11.7 4.3" fill="none" stroke="#111" stroke-width="1.15"/></svg>
<div class="r" style="left:941px;top:500px;width:14px;height:14px;border:1px solid #a6a6a6;background:#fff"></div>
<svg class="r" style="left:282px;top:525px" width="8" height="12" viewBox="0 0 8 12"><rect x="0" y="0" width="8" height="12" fill="#666"/><rect x="1" y="2" width="6" height="3" fill="#fff"/><rect x="1" y="6" width="6" height="2" fill="#fff"/><rect x="1" y="9" width="6" height="2" fill="#fff"/></svg>
<div class="t" style="left:333px;top:524.19px;font-size:11px;color:#1e1e1e;letter-spacing:0.1px;">12</div>
<div class="t" style="left:375px;top:524.19px;font-size:11px;color:#1e1e1e;letter-spacing:0.1px;">INF7</div>
<div class="t" style="left:504.5px;top:524.19px;font-size:11px;color:#1e1e1e;letter-spacing:0.15px;">nvarchar(50)</div>
<div class="r" style="left:690px;top:523px;width:14px;height:14px;border:1px solid #a6a6a6;background:#fff"></div>
<svg class="r" style="left:690px;top:523px" width="16" height="16" viewBox="0 0 16 16"><path d="M4.3 8.3 L7 11 L11.7 4.3" fill="none" stroke="#111" stroke-width="1.15"/></svg>
<div class="r" style="left:941px;top:523px;width:14px;height:14px;border:1px solid #a6a6a6;background:#fff"></div>
<svg class="r" style="left:282px;top:548px" width="8" height="12" viewBox="0 0 8 12"><rect x="0" y="0" width="8" height="12" fill="#666"/><rect x="1" y="2" width="6" height="3" fill="#fff"/><rect x="1" y="6" width="6" height="2" fill="#fff"/><rect x="1" y="9" width="6" height="2" fill="#fff"/></svg>
<div class="t" style="left:333px;top:547.19px;font-size:11px;color:#1e1e1e;letter-spacing:0.1px;">13</div>
<div class="t" style="left:375px;top:547.19px;font-size:11px;color:#1e1e1e;letter-spacing:0.1px;">INF8</div>
<div class="t" style="left:504.5px;top:547.19px;font-size:11px;color:#1e1e1e;letter-spacing:0.15px;">nvarchar(50)</div>
<div class="r" style="left:690px;top:546px;width:14px;height:14px;border:1px solid #a6a6a6;background:#fff"></div>
<svg class="r" style="left:690px;top:546px" width="16" height="16" viewBox="0 0 16 16"><path d="M4.3 8.3 L7 11 L11.7 4.3" fill="none" stroke="#111" stroke-width="1.15"/></svg>
<div class="r" style="left:941px;top:546px;width:14px;height:14px;border:1px solid #a6a6a6;background:#fff"></div>
<svg class="r" style="left:282px;top:571px" width="8" height="12" viewBox="0 0 8 12"><rect x="0" y="0" width="8" height="12" fill="#666"/><rect x="1" y="2" width="6" height="3" fill="#fff"/><rect x="1" y="6" width="6" height="2" fill="#fff"/><rect x="1" y="9" width="6" height="2" fill="#fff"/></svg>
<div class="t" style="left:333px;top:570.19px;font-size:11px;color:#1e1e1e;letter-spacing:0.1px;">14</div>
<div class="t" style="left:375px;top:570.19px;font-size:11px;color:#1e1e1e;letter-spacing:0.1px;">INF9</div>
<div class="t" style="left:504.5px;top:570.19px;font-size:11px;color:#1e1e1e;letter-spacing:0.15px;">nvarchar(50)</div>
<div class="r" style="left:690px;top:569px;width:14px;height:14px;border:1px solid #a6a6a6;background:#fff"></div>
<svg class="r" style="left:690px;top:569px" width="16" height="16" viewBox="0 0 16 16"><path d="M4.3 8.3 L7 11 L11.7 4.3" fill="none" stroke="#111" stroke-width="1.15"/></svg>
<div class="r" style="left:941px;top:569px;width:14px;height:14px;border:1px solid #a6a6a6;background:#fff"></div>
<svg class="r" style="left:282px;top:594px" width="8" height="12" viewBox="0 0 8 12"><rect x="0" y="0" width="8" height="12" fill="#666"/><rect x="1" y="2" width="6" height="3" fill="#fff"/><rect x="1" y="6" width="6" height="2" fill="#fff"/><rect x="1" y="9" width="6" height="2" fill="#fff"/></svg>
<div class="t" style="left:333px;top:593.19px;font-size:11px;color:#1e1e1e;letter-spacing:0.1px;">15</div>
<div class="t" style="left:375px;top:593.19px;font-size:11px;color:#1e1e1e;letter-spacing:0.1px;">INF10</div>
<div class="t" style="left:504.5px;top:593.19px;font-size:11px;color:#1e1e1e;letter-spacing:0.15px;">nvarchar(50)</div>
<div class="r" style="left:690px;top:592px;width:14px;height:14px;border:1px solid #a6a6a6;background:#fff"></div>
<svg class="r" style="left:690px;top:592px" width="16" height="16" viewBox="0 0 16 16"><path d="M4.3 8.3 L7 11 L11.7 4.3" fill="none" stroke="#111" stroke-width="1.15"/></svg>
<div class="r" style="left:941px;top:592px;width:14px;height:14px;border:1px solid #a6a6a6;background:#fff"></div>
<svg class="r" style="left:282px;top:617px" width="8" height="12" viewBox="0 0 8 12"><rect x="0" y="0" width="8" height="12" fill="#666"/><rect x="1" y="2" width="6" height="3" fill="#fff"/><rect x="1" y="6" width="6" height="2" fill="#fff"/><rect x="1" y="9" width="6" height="2" fill="#fff"/></svg>
<div class="t" style="left:333px;top:616.19px;font-size:11px;color:#1e1e1e;letter-spacing:0.1px;">16</div>
<div class="t" style="left:375px;top:616.19px;font-size:11px;color:#1e1e1e;letter-spacing:0.1px;">CRED</div>
<div class="t" style="left:437px;top:616.19px;font-size:11px;color:#1e1e1e;letter-spacing:0.1px;">Created on</div>
<div class="t" style="left:504.5px;top:616.19px;font-size:11px;color:#1e1e1e;letter-spacing:0.15px;">date</div>
<div class="r" style="left:690px;top:615px;width:14px;height:14px;border:1px solid #a6a6a6;background:#fff"></div>
<svg class="r" style="left:690px;top:615px" width="16" height="16" viewBox="0 0 16 16"><path d="M4.3 8.3 L7 11 L11.7 4.3" fill="none" stroke="#111" stroke-width="1.15"/></svg>
<div class="r" style="left:941px;top:615px;width:14px;height:14px;border:1px solid #a6a6a6;background:#fff"></div>
<svg class="r" style="left:282px;top:640px" width="8" height="12" viewBox="0 0 8 12"><rect x="0" y="0" width="8" height="12" fill="#666"/><rect x="1" y="2" width="6" height="3" fill="#fff"/><rect x="1" y="6" width="6" height="2" fill="#fff"/><rect x="1" y="9" width="6" height="2" fill="#fff"/></svg>
<div class="t" style="left:333px;top:639.19px;font-size:11px;color:#1e1e1e;letter-spacing:0.1px;">17</div>
<div class="t" style="left:375px;top:639.19px;font-size:11px;color:#1e1e1e;letter-spacing:0.1px;">CREU</div>
<div class="t" style="left:437px;top:639.19px;font-size:11px;color:#1e1e1e;letter-spacing:0.1px;">Created by</div>
<div class="t" style="left:504.5px;top:639.19px;font-size:11px;color:#1e1e1e;letter-spacing:0.15px;">nvarchar(50)</div>
<div class="r" style="left:690px;top:638px;width:14px;height:14px;border:1px solid #a6a6a6;background:#fff"></div>
<svg class="r" style="left:690px;top:638px" width="16" height="16" viewBox="0 0 16 16"><path d="M4.3 8.3 L7 11 L11.7 4.3" fill="none" stroke="#111" stroke-width="1.15"/></svg>
<div class="r" style="left:941px;top:638px;width:14px;height:14px;border:1px solid #a6a6a6;background:#fff"></div>
<svg class="r" style="left:282px;top:663px" width="8" height="12" viewBox="0 0 8 12"><rect x="0" y="0" width="8" height="12" fill="#666"/><rect x="1" y="2" width="6" height="3" fill="#fff"/><rect x="1" y="6" width="6" height="2" fill="#fff"/><rect x="1" y="9" width="6" height="2" fill="#fff"/></svg>
<div class="t" style="left:333px;top:662.19px;font-size:11px;color:#1e1e1e;letter-spacing:0.1px;">18</div>
<div class="t" style="left:375px;top:662.19px;font-size:11px;color:#1e1e1e;letter-spacing:0.1px;">MODD</div>
<div class="t" style="left:437px;top:662.19px;font-size:11px;color:#1e1e1e;letter-spacing:0.1px;">Modified on</div>
<div class="t" style="left:504.5px;top:662.19px;font-size:11px;color:#1e1e1e;letter-spacing:0.15px;">datetime</div>
<div class="r" style="left:690px;top:661px;width:14px;height:14px;border:1px solid #a6a6a6;background:#fff"></div>
<svg class="r" style="left:690px;top:661px" width="16" height="16" viewBox="0 0 16 16"><path d="M4.3 8.3 L7 11 L11.7 4.3" fill="none" stroke="#111" stroke-width="1.15"/></svg>
<div class="r" style="left:941px;top:661px;width:14px;height:14px;border:1px solid #a6a6a6;background:#fff"></div>
<svg class="r" style="left:282px;top:686px" width="8" height="12" viewBox="0 0 8 12"><rect x="0" y="0" width="8" height="12" fill="#666"/><rect x="1" y="2" width="6" height="3" fill="#fff"/><rect x="1" y="6" width="6" height="2" fill="#fff"/><rect x="1" y="9" width="6" height="2" fill="#fff"/></svg>
<div class="t" style="left:333px;top:685.19px;font-size:11px;color:#1e1e1e;letter-spacing:0.1px;">19</div>
<div class="t" style="left:375px;top:685.19px;font-size:11px;color:#1e1e1e;letter-spacing:0.1px;">MODU</div>
<div class="t" style="left:437px;top:685.19px;font-size:11px;color:#1e1e1e;letter-spacing:0.1px;">Modified by</div>
<div class="t" style="left:504.5px;top:685.19px;font-size:11px;color:#1e1e1e;letter-spacing:0.15px;">nvarchar(50)</div>
<div class="r" style="left:690px;top:684px;width:14px;height:14px;border:1px solid #a6a6a6;background:#fff"></div>
<svg class="r" style="left:690px;top:684px" width="16" height="16" viewBox="0 0 16 16"><path d="M4.3 8.3 L7 11 L11.7 4.3" fill="none" stroke="#111" stroke-width="1.15"/></svg>
<div class="r" style="left:941px;top:684px;width:14px;height:14px;border:1px solid #a6a6a6;background:#fff"></div>
</body></html>
